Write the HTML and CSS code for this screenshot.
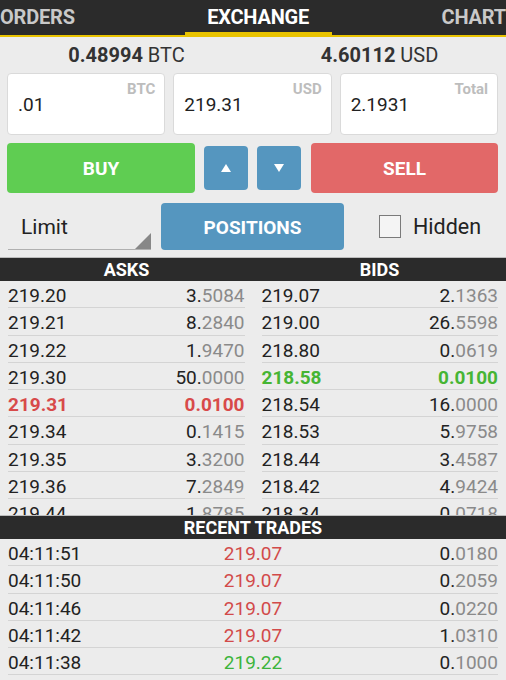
FILE: index.html
```html
<!DOCTYPE html>
<html>
<head>
<meta charset="utf-8">
<link rel="stylesheet" href="styles.css">
</head>
<body>
<div class="app">
  <div class="tabs">
    <div class="tab">ORDERS</div>
    <div class="tab active">EXCHANGE</div>
    <div class="tab">CHART</div>
  </div>

  <div class="balances">
    <div class="bal"><b>0.48994</b> BTC</div>
    <div class="bal"><b>4.60112</b> USD</div>
  </div>

  <div class="inputs">
    <div class="field"><span class="lbl">BTC</span><span class="val">.01</span></div>
    <div class="field"><span class="lbl">USD</span><span class="val">219.31</span></div>
    <div class="field"><span class="lbl">Total</span><span class="val">2.1931</span></div>
  </div>

  <div class="actions">
    <div class="btn buy">BUY</div>
    <div class="btn step"><svg width="10" height="8" viewBox="0 0 10 8"><polygon points="5,0 10,8 0,8" fill="#fff"/></svg></div>
    <div class="btn step"><svg width="10" height="8" viewBox="0 0 10 8"><polygon points="0,0 10,0 5,8" fill="#fff"/></svg></div>
    <div class="btn sell">SELL</div>
  </div>

  <div class="options">
    <div class="select">Limit<span class="corner"></span></div>
    <div class="btn positions">POSITIONS</div>
    <div class="hidden"><span class="check"></span>Hidden</div>
  </div>

  <div class="head two"><div>ASKS</div><div>BIDS</div></div>

  <div class="book">
    <div class="side">
      <div class="row"><span>219.20</span><span>3.<i>5084</i></span></div>
      <div class="row"><span>219.21</span><span>8.<i>2840</i></span></div>
      <div class="row"><span>219.22</span><span>1.<i>9470</i></span></div>
      <div class="row"><span>219.30</span><span>50.<i>0000</i></span></div>
      <div class="row red"><span>219.31</span><span>0.0100</span></div>
      <div class="row"><span>219.34</span><span>0.<i>1415</i></span></div>
      <div class="row"><span>219.35</span><span>3.<i>3200</i></span></div>
      <div class="row"><span>219.36</span><span>7.<i>2849</i></span></div>
      <div class="row"><span>219.44</span><span>1.<i>8785</i></span></div>
    </div>
    <div class="side">
      <div class="row"><span>219.07</span><span>2.<i>1363</i></span></div>
      <div class="row"><span>219.00</span><span>26.<i>5598</i></span></div>
      <div class="row"><span>218.80</span><span>0.<i>0619</i></span></div>
      <div class="row green"><span>218.58</span><span>0.0100</span></div>
      <div class="row"><span>218.54</span><span>16.<i>0000</i></span></div>
      <div class="row"><span>218.53</span><span>5.<i>9758</i></span></div>
      <div class="row"><span>218.44</span><span>3.<i>4587</i></span></div>
      <div class="row"><span>218.42</span><span>4.<i>9424</i></span></div>
      <div class="row"><span>218.34</span><span>0.<i>0718</i></span></div>
    </div>
  </div>

  <div class="head"><div>RECENT TRADES</div></div>

  <div class="trades">
    <div class="trow"><span>04:11:51</span><span class="tp down">219.07</span><span class="tq">0.<i>0180</i></span></div>
    <div class="trow"><span>04:11:50</span><span class="tp down">219.07</span><span class="tq">0.<i>2059</i></span></div>
    <div class="trow"><span>04:11:46</span><span class="tp down">219.07</span><span class="tq">0.<i>0220</i></span></div>
    <div class="trow"><span>04:11:42</span><span class="tp down">219.07</span><span class="tq">1.<i>0310</i></span></div>
    <div class="trow"><span>04:11:38</span><span class="tp up">219.22</span><span class="tq">0.<i>1000</i></span></div>
  </div>
</div>
</body>
</html>
```

FILE: styles.css
```css
* { box-sizing: border-box; }
html, body { margin: 0; padding: 0; }
body {
  background: #ececec;
  font-family: Roboto, "Liberation Sans", sans-serif;
  color: #222;
  width: 506px;
  height: 680px;
  overflow: hidden;
}
.app { display: flex; flex-direction: column; }

.tabs {
  display: flex;
  justify-content: space-between;
  height: 37px;
  background: #2b2b2b;
  border-bottom: 2px solid #e9c300;
}
.tab {
  font-weight: 700;
  font-size: 20px;
  color: #c9c9c9;
  line-height: 35px;
  letter-spacing: -0.2px;
}
.tab.active {
  color: #fff;
  width: 147px;
  text-align: center;
  border-bottom: 3px solid #e9c300;
  line-height: 34px;
  height: 35px;
}

.balances {
  display: flex;
  height: 36px;
  align-items: center;
  font-size: 20px;
  color: #333;
}
.bal { flex: 1; text-align: center; }
.bal b { font-weight: 700; }

.inputs {
  display: flex;
  gap: 8px;
  padding: 0 8px 0 7px;
}
.field {
  flex: 1;
  height: 62px;
  background: #fff;
  border: 1px solid #dadada;
  border-radius: 4px;
  display: flex;
  flex-direction: column;
  padding: 6px 9px 0 10px;
}
.lbl {
  align-self: flex-end;
  font-size: 15px;
  font-weight: 700;
  color: #bdbdbd;
  line-height: 18px;
}
.val {
  font-size: 19px;
  line-height: 22px;
  margin-top: -4px;
  color: #222;
}

.actions {
  display: flex;
  align-items: center;
  gap: 9px;
  padding: 0 8px 0 7px;
  margin-top: 8px;
  height: 50px;
}
.btn {
  color: #fff;
  font-weight: 700;
  font-size: 19px;
  border-radius: 4px;
  display: flex;
  align-items: center;
  justify-content: center;
}
.buy { background: #5fcd52; width: 188px; height: 50px; }
.sell { background: #e26868; flex: 1; height: 50px; margin-left: 1px; }
.step { background: #5596bf; width: 44px; height: 44px; }

.options {
  display: flex;
  align-items: center;
  padding: 0 8px;
  margin-top: 10px;
  height: 47px;
}
.select {
  position: relative;
  width: 143px;
  height: 46px;
  font-size: 21px;
  color: #222;
  padding: 11px 0 0 13px;
  border-bottom: 1px solid #b0b0b0;
}
.corner {
  position: absolute;
  right: 0;
  bottom: 0;
  width: 0;
  height: 0;
  border-left: 16px solid transparent;
  border-bottom: 16px solid #878787;
}
.positions {
  background: #5596bf;
  width: 183px;
  height: 47px;
  margin-left: 10px;
  padding-top: 1px;
}
.hidden {
  display: flex;
  align-items: center;
  font-size: 21.5px;
  color: #222;
  margin-left: 35px;
}
.check {
  width: 22px;
  height: 23px;
  border: 1.5px solid #7a7a7a;
  background: #f4f4f4;
  margin-right: 12px;
}

.head {
  display: flex;
  background: #2b2b2b;
  color: #fff;
  font-weight: 700;
  font-size: 18px;
  height: 24px;
  line-height: 24px;
  border-top: 1px solid #bcbcbc;
}
.head > div { flex: 1; text-align: center; }
.two { margin-top: 7px; }

.book {
  display: flex;
  gap: 17px;
  padding: 0 8px;
  height: 234px;
  overflow: hidden;
}
.side { flex: 1; }
.row, .trow {
  display: flex;
  justify-content: space-between;
  height: 27.3px;
  padding-top: 3px;
  line-height: 24px;
  font-size: 19px;
  border-bottom: 1px solid #d4d4d4;
  color: #222;
}
i { font-style: normal; color: #8a8a8a; }
.row.red { color: #d84a4a; font-weight: 700; }
.row.green { color: #46b534; font-weight: 700; }

.trades { padding: 0 8px; }
.trow span { flex: 1; }
.tp { text-align: center; }
.tq { text-align: right; }
.down { color: #d24a4a; }
.up { color: #3cb43c; }
```
